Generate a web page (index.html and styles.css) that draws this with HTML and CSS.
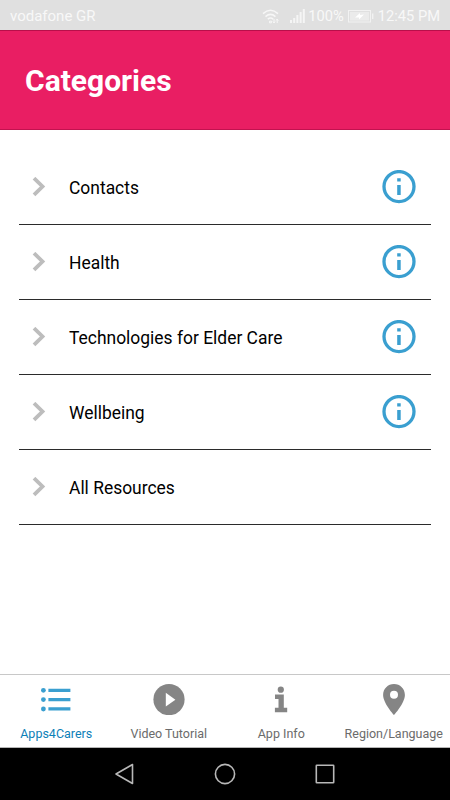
FILE: index.html
```
<!DOCTYPE html>
<html lang="en">
<head>
    <meta charset="UTF-8">
    <meta name="viewport" content="width=device-width, initial-scale=1.0">
    <title>Apps4Carers</title>
    <link rel="stylesheet" href="styles.css">
</head>
<body>
    <svg width="0" height="0" class="symbols">
        <symbol id="chevron" viewBox="0 0 14 20">
            <path d="M2 1.2 L10.5 9.5 L2 17.8" fill="none" stroke="#bdbdbd" stroke-width="3.8"/>
        </symbol>
        <symbol id="info" viewBox="0 0 34 34">
            <circle cx="17" cy="16.6" r="15" fill="none" stroke="#3a9fd0" stroke-width="3.3"/>
            <path d="M15.2 8.2h3.5v3.3h-3.5zM15.2 15h3.5v10h-3.5z" fill="#3a9fd0"/>
        </symbol>
    </svg>

    <div class="status-bar">
        <span class="carrier">vodafone GR</span>
        <svg class="wifi" width="18" height="15" viewBox="0 0 18 15" fill="none" stroke="#f7f7f7" stroke-width="1.5">
            <path d="M1 4.6 Q8.5 -2 16 4.6M3.5 7.6 Q8.5 3.2 13.5 7.6M5.8 10.2 Q8.5 8 11.2 10.2"/>
            <path d="M7.5 12.2h2v1.6h-2zM12 10v4M10.8 12.5 L12 14 L13.2 12.5M15.2 14v-4M14 11.5 L15.2 10 L16.4 11.5" stroke-width="1"/>
        </svg>
        <svg class="signal" width="16" height="14" viewBox="0 0 16 14" fill="#f5f5f5">
            <path d="M0 11h2v3H0zM3.2 9h2v5h-2zM6.4 6h2v8h-2zM9.6 3h2v11h-2zM12.8 0h2v14h-2z"/>
        </svg>
        <span class="percent">100%</span>
        <svg class="battery" width="26" height="13" viewBox="0 0 26 13">
            <rect x=".5" y=".5" width="22" height="11.5" fill="none" stroke="#f2f2f2"/>
            <rect x="2" y="2" width="19" height="8.5" fill="#ebebeb"/>
            <path d="M24 3.5h1.4v5.5H24z" fill="#f2f2f2"/>
            <path d="M7 7.5 L12 3 L12 5 L16 4.5 L11 9.5 L11 7.5z" fill="#fff"/>
        </svg>
        <span class="time">12:45 PM</span>
    </div>

    <header class="header">
        <h1>Categories</h1>
    </header>

    <ul class="categories">
        <li>
            <svg class="chevron"><use href="#chevron"/></svg>
            <span>Contacts</span>
            <svg class="info"><use href="#info"/></svg>
        </li>
        <li>
            <svg class="chevron"><use href="#chevron"/></svg>
            <span>Health</span>
            <svg class="info"><use href="#info"/></svg>
        </li>
        <li>
            <svg class="chevron"><use href="#chevron"/></svg>
            <span>Technologies for Elder Care</span>
            <svg class="info"><use href="#info"/></svg>
        </li>
        <li>
            <svg class="chevron"><use href="#chevron"/></svg>
            <span>Wellbeing</span>
            <svg class="info"><use href="#info"/></svg>
        </li>
        <li>
            <svg class="chevron"><use href="#chevron"/></svg>
            <span>All Resources</span>
        </li>
    </ul>

    <nav class="tabs">
        <a class="tab active">
            <svg width="32" height="32" viewBox="0 0 32 32" fill="#3a9fd0">
                <circle cx="3.4" cy="7.3" r="2.4"/>
                <circle cx="3.4" cy="16.6" r="2.4"/>
                <circle cx="3.4" cy="26" r="2.4"/>
                <path d="M8.4 5.7h22v3.3h-22zM8.4 15h22v3.3h-22zM8.4 24.300h22v3.3h-22z"/>
            </svg>
            <span>Apps4Carers</span>
        </a>
        <a class="tab">
            <svg width="32" height="32" viewBox="0 0 32 32">
                <circle cx="16" cy="16.6" r="15.6" fill="#858585"/>
                <path d="M12.8 9.8v13.8l9.6-6.9z" fill="#fff"/>
            </svg>
            <span>Video Tutorial</span>
        </a>
        <a class="tab">
            <svg width="32" height="32" viewBox="0 0 32 32" fill="#858585">
                <circle cx="15.8" cy="6.700" r="3.1"/>
                <path d="M10 11.600h8.800v13.200h3.400v4.400H9.900v-4.400h3.600v-8.800H10z"/>
            </svg>
            <span>App Info</span>
        </a>
        <a class="tab">
            <svg width="32" height="32" viewBox="0 0 32 32">
                <path d="M16 1C9.9 1 5.100 5.800 5.100 11.900 5.100 20 16 32 16 32s10.900-12 10.900-20.100C26.900 5.800 22.100 1 16 1zm0 14.800a4 4 0 1 1 0-8 4 4 0 0 1 0 8z" fill="#858585"/>
            </svg>
            <span>Region/Language</span>
        </a>
    </nav>

    <div class="system-nav">
        <svg width="22" height="22" viewBox="0 0 22 22"><path d="M18.5 1.5v19L2 11z"/></svg>
        <svg width="22" height="22" viewBox="0 0 22 22"><circle cx="11" cy="11" r="9.6"/></svg>
        <svg width="22" height="22" viewBox="0 0 22 22"><rect x="2.3" y="2.3" width="17.4" height="17.4" rx=".5"/></svg>
    </div>
</body>
</html>
```
FILE: styles.css
```
* {
    box-sizing: border-box;
}
body {
    margin: 0;
    height: 800px;
    display: flex;
    flex-direction: column;
    font-family: Roboto, "Liberation Sans", sans-serif;
    background-color: #fff;
    overflow: hidden;
}
svg {
    display: block;
    flex-shrink: 0;
}
.symbols {
    position: absolute;
}
.status-bar {
    height: 30px;
    display: flex;
    align-items: center;
    padding: 2px 10px 0;
    background-color: #e0e0e0;
    color: #f8f8f8;
    font-size: 15px;
    white-space: nowrap;
}
.carrier {
    flex: 1;
}
.wifi {
    margin-right: 10px;
}
.signal {
    margin-right: 2px;
}
.percent,
.time {
    font-size: 14.7px;
}
.percent {
    margin-right: 4px;
}
.battery {
    margin-right: 4px;
}
.header {
    height: 100px;
    padding: 1px 25px 0;
    display: flex;
    align-items: center;
    background-color: #e91e63;
    border-top: 1px solid #b80f4a;
    border-bottom: 1px solid #c2124f;
}
.header h1 {
    margin: 0;
    font-size: 30px;
    font-weight: bold;
    color: #fff;
}
.categories {
    flex: 1;
    list-style: none;
    margin: 0;
    padding: 20px 19px 0;
}
.categories li {
    height: 75px;
    display: flex;
    align-items: center;
    padding: 0 15px 0 13px;
    border-bottom: 1px solid #2b2b2b;
    font-size: 17.45px;
    color: #000;
}
.categories span {
    flex: 1;
    padding-top: 1px;
}
.chevron {
    width: 14px;
    height: 20px;
    margin-right: 23px;
}
.info {
    width: 34px;
    height: 34px;
}
.tabs {
    height: 74px;
    display: flex;
    border-top: 1px solid #c8c8c8;
    border-bottom: 1px solid #b5b5b5;
}
.tab {
    flex: 1 1 0;
    min-width: 0;
    display: flex;
    flex-direction: column;
    align-items: center;
    padding-top: 8px;
    font-size: 12.5px;
    color: #6b6b6b;
    white-space: nowrap;
}
.tab span {
    margin-top: 11px;
}
.tab.active {
    color: #0c80b8;
}
.system-nav {
    height: 52px;
    display: flex;
    align-items: center;
    justify-content: center;
    gap: 78px;
    background-color: #000;
}
.system-nav svg {
    fill: none;
    stroke: #b8b8b8;
    stroke-width: 1.6;
    stroke-linejoin: round;
}
```
